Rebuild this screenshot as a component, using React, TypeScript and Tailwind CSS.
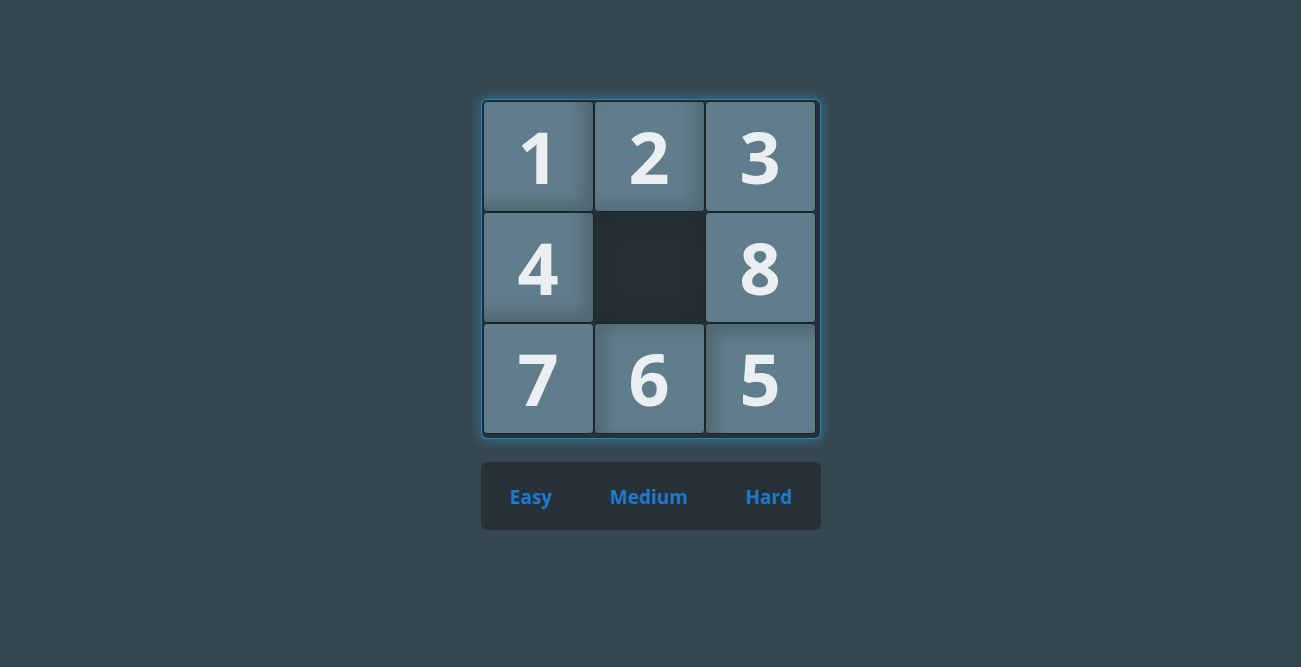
import { useState } from "react";

const tiles: (number | null)[] = [1, 2, 3, 4, null, 8, 7, 6, 5];

// shading per tile, taken from the screenshot (mid-slide look)
const shade: Record<number, string> = {
	1: "shadow-[inset_-10px_-8px_14px_rgba(0,0,0,0.18)]",
	2: "shadow-[inset_-10px_-6px_14px_rgba(0,0,0,0.14)]",
	3: "",
	4: "shadow-[inset_-10px_-10px_14px_rgba(0,0,0,0.16)]",
	8: "",
	7: "",
	6: "shadow-[inset_10px_4px_14px_rgba(0,0,0,0.16)]",
	5: "shadow-[inset_10px_10px_14px_rgba(0,0,0,0.16)]",
};

export default function App() {
	const [level, setLevel] = useState("Easy");

	return (
		<div
			className="min-h-[667px] w-full bg-[#37474f] flex flex-col items-center pt-[100px]"
			style={{ fontFamily: '"Open Sans", "Noto Sans", sans-serif' }}
		>
			{/* Board */}
			<div className="w-[338px] h-[338px] bg-[#263238] rounded-[5px] pl-[1px] pt-[1px] shadow-[0_0_0_1px_#2f7fae,0_0_12px_3px_rgba(41,150,220,0.45)]">
				<div className="grid grid-cols-[repeat(3,111px)] grid-rows-[repeat(3,111px)]">
					{tiles.map((n, i) =>
						n === null ? (
							<div
								key={i}
								className="bg-[#263238] shadow-[inset_0_0_30px_rgba(0,0,0,0.15)]"
							/>
						) : (
							<div
								key={i}
								className={`flex items-center justify-center bg-[#607d8b] border border-[#1b2429] rounded-[4px] text-[#eceff1] text-[72px] font-bold leading-none select-none ${shade[n]}`}
							>
								<span className="-mt-[2px]">{n}</span>
							</div>
						)
					)}
				</div>
			</div>

			{/* Levels */}
			<div className="ml-[1px] mt-[24px] w-[340px] h-[68px] bg-[#263238] rounded-[6px] flex items-center justify-around">
				{["Easy", "Medium", "Hard"].map((l) => (
					<button
						key={l}
						type="button"
						onClick={() => setLevel(l)}
						className={`text-[19px] font-bold text-[#1f78cc] mt-[3px] ${level === l ? "" : ""}`}
					>
						{l}
					</button>
				))}
			</div>
		</div>
	);
}
